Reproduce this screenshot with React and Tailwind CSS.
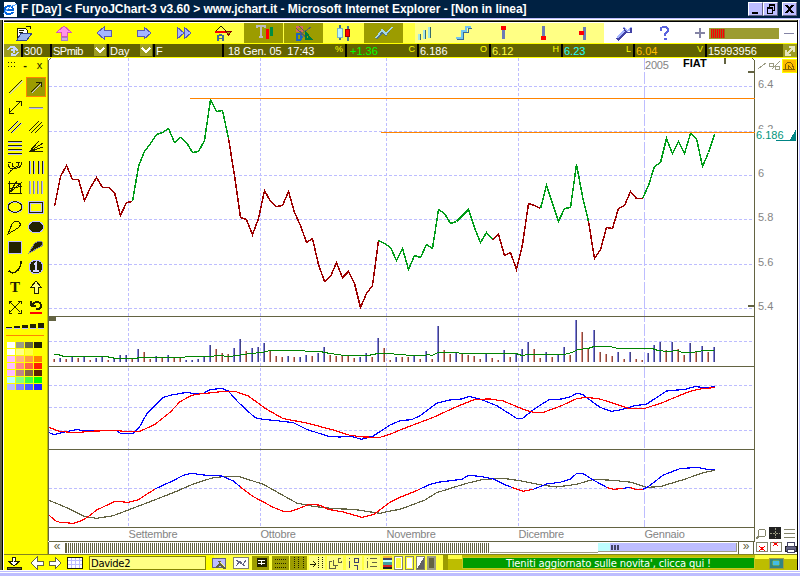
import React from 'react';

const UP = '#009c18';
const DOWN = '#9c0000';

// closing prices as plot heights, one every 6px
const prices = [
  206, 176, 165, 179, 179, 200, 187, 177, 187, 187, 192, 215, 202,
  201, 166, 151, 143, 134, 132, 128, 142, 137, 142, 152, 151, 140, 99, 111, 110, 138,
  175, 217, 219, 234, 218, 190, 201, 206, 205, 191, 212, 225, 242, 238, 264, 281, 276, 262, 277, 271, 283,
  307, 293, 285, 240, 243, 247, 260, 248, 269, 255, 257, 244, 248, 209, 213, 223, 221, 215, 209, 227, 242, 232,
  239, 234, 255, 252, 269, 244, 203, 205, 208, 185, 203, 221, 208, 207, 164,
  196, 221, 258, 249, 227, 228, 208, 205, 191, 198, 198, 185, 166, 162, 138, 153, 141, 153, 133, 138, 166, 152, 134,
];

const trends = [
  [0, 13, DOWN], [13, 29, UP], [29, 54, DOWN], [54, 73, UP], [73, 81, DOWN],
  [81, 89, UP], [89, 98, DOWN], [98, 110, UP],
];

const volumes = '3r 4b 3r 5b 4r 5b 2r 4b 5b 2r 3b 7b 7b 3r 13b 10r 3r 6b 4r 7b 5r 4r 2b 2b 3b 5b 17b 13r 9r 8r 14b 23b 11r 14b 15b 19b 11r 6r 5r 6b 5r 5b 7b 6r 9b 15b 7r 6r 6r 6r 4r 5b 9b 5r 24b 14r 2r 5b 5r 5r 6b 3r 11b 3r 36b 12r 8r 9b 8r 7r 6r 3r 8b 4r 2r 12b 5r 8b 13b 20b 13r 4r 10b 5r 7b 15b 7r 42b 30r 13r 32b 10r 8r 6r 10b 3r 10b 3r 2r 9b 17b 20b 12r 20b 13r 7r 19b 10r 16b 10r 15b'.split(' ');

const volumeAverage = '54,354 58,354 64,356 106,356 116,358 135,358 140,357 170,357 200,356 210,356 218,355 230,356 250,353 262,352 270,350 290,350 320,351 330,353 345,355 368,355 378,353 388,353 400,354 412,355 424,355 428,354 432,355 438,352 456,352 462,353 516,353 522,355 528,354 564,354 572,352 578,349 588,348 594,346 610,346 618,348 644,348 652,348 658,350 668,351 678,350 682,352 692,352 704,350 714,350';

// oscillators, in thirds of a pixel below y = 310
const fastLine = '147,368 163,374 190,367 232,358 250,363 290,361 350,362 362,370 400,370 418,352 440,312 490,262 515,255 560,247 590,252 610,250 630,239 665,235 685,243 715,277 765,323 790,328 830,332 880,338 920,358 985,379 1020,381 1050,378 1085,388 1120,378 1170,345 1200,332 1235,329 1260,317 1310,280 1350,270 1385,267 1407,259 1440,267 1490,287 1550,325 1568,325 1600,299 1647,269 1685,267 1712,260 1730,250 1748,253 1770,270 1800,292 1835,304 1865,299 1900,288 1940,282 2000,243 2055,238 2085,230 2120,233 2144,230';
const slowLine = '147,352 175,363 210,367 240,367 265,364 350,361 370,364 420,364 465,343 510,307 540,275 575,256 605,251 640,248 670,244 705,244 745,258 800,298 850,326 920,339 1000,360 1050,376 1090,381 1140,382 1175,371 1200,360 1300,322 1370,290 1425,268 1470,267 1510,273 1570,298 1600,307 1630,307 1680,289 1730,266 1760,262 1800,267 1840,280 1885,295 1935,295 1990,277 2030,260 2070,244 2105,236 2144,233';
const signalLine = '147,571 205,595 255,620 290,625 340,617 440,579 520,548 580,522 640,503 680,499 715,499 790,523 890,579 940,589 1000,596 1060,598 1140,610 1160,605 1200,598 1275,570 1310,548 1400,520 1450,508 1510,505 1565,513 1630,526 1670,531 1730,523 1780,508 1840,511 1895,517 1940,532 1980,530 2050,509 2110,488 2144,481';
const momentum = [
  ['#ff0000', '147,615 165,632 180,637 220,640 245,632 265,620 290,600 345,574 385,577 415,569 465,537'],
  ['#0000ff', '465,537 515,514 550,496 575,490 620,496 665,498 700,513 720,530'],
  ['#ff0000', '720,530 760,560 820,592 850,604 872,604 900,594 925,584 940,583 960,586 985,598 1030,606 1085,622 1120,614 1170,577 1200,562 1250,542 1260,537'],
  ['#0000ff', '1260,537 1290,523 1320,516 1385,508 1405,496 1440,499 1480,507 1510,522 1535,532'],
  ['#ff0000', '1535,532 1570,544 1600,538'],
  ['#0000ff', '1600,538 1640,522 1680,517 1712,507 1730,490 1748,490 1780,510 1820,532'],
  ['#ff0000', '1820,532 1840,538 1870,535'],
  ['#0000ff', '1870,535 1890,532'],
  ['#ff0000', '1890,532 1905,538 1928,538'],
  ['#0000ff', '1928,538 1945,530 1990,495 2040,476 2092,472 2120,478 2144,479'],
];

const months = [[128, 'Settembre'], [260, 'Ottobre'], [386, 'Novembre'], [518, 'Dicembre'], [644, 'Gennaio']];

const swatches = [
  'bg-white', 'bg-[#9c9c84]', 'bg-[#636342]', 'bg-[#212100]',
  'bg-white', 'bg-[#ffff84]', 'bg-[#ffff42]', 'bg-[#ffff00]',
  'bg-[#ffbdff]', 'bg-[#ffb084]', 'bg-[#ff9c42]', 'bg-[#ff8400]',
  'bg-[#ffbdff]', 'bg-[#ff8484]', 'bg-[#ff6342]', 'bg-[#ff2100]',
  'bg-[#ffbdff]', 'bg-[#bd8484]', 'bg-[#846342]', 'bg-[#5a2100]',
  'bg-[#bdffff]', 'bg-[#84ff84]', 'bg-[#42ff42]', 'bg-[#00ff00]',
  'bg-[#bdbdff]', 'bg-[#8484ff]', 'bg-[#4a5aff]', 'bg-[#2121ff]',
];

const Icon = ({ w = 16, h = 16, children }) => (
  <svg width={w} height={h} viewBox={`0 0 ${w} ${h}`} fill="none" stroke="#212100" shapeRendering="crispEdges" className="block shrink-0">
    {children}
  </svg>
);

const drawTools = [
  <><path d="M2.500 15.500L15.500 2.500" stroke="#bdbdff" /><path d="M1.500 14.500L14.500 1.500" /></>,
  <><path d="M4 14L14 4" stroke="#bdbdff" /><path d="M3 13L13 3M8 3h5v5" /></>,
  <path d="M2 14L14 2M9 2h5v5M2 9v5h5" />,
  <><path d="M1 9.500h14" stroke="#bdbdff" /><path d="M1 8.500h14" stroke="#84846b" /></>,
  <><path d="M2 12L12 2M5 14L15 4" stroke="#bdbdff" /><path d="M1 12L11 2M4 14L14 4" /></>,
  <path d="M1 12L11 2M3 14L14 3M7 14L15 6" />,
  <><path d="M1 3.500h14M1 7.500h14M1 11.500h14M1 15.500h14" stroke="#bdbdff" /><path d="M1 2.500h14M1 6.500h14M1 10.500h14M1 14.500h14" /></>,
  <path d="M1 13L11 2M1 13L15 4M1 13L15 8M1 13L15 12" />,
  <path d="M1 15L8 8M1 5q2 7 7 4q6 1 7-6M5 4q0 5 4 4q3 0 3-5M1 3h3M9 3h4M3 12l5-3" />,
  <><path d="M2.500 2v13M6.500 2v13M11.500 2v13M15.500 2v13" stroke="#bdbdff" /><path d="M1.500 2v13M5.500 2v13M10.500 2v13M14.500 2v13" /></>,
  <path d="M2.500 14V2M2 14.500h13M2 14L15 3M2 14L10 2M2 10L15 7M1 4.500h12v10" />,
  <><path d="M2.500 2v13M6.500 2v13M10.500 2v13M14.500 2v13" stroke="#bdbdff" /><path d="M1.500 2v13M5.500 2v13M9.500 2v13M13.500 2v13" stroke="#84846b" /></>,
  <><ellipse cx="8" cy="8" rx="7" ry="5.500" stroke="#bdbdff" strokeWidth="2" /><ellipse cx="8" cy="8" rx="6.800" ry="5.300" /></>,
  <><rect x="1.500" y="3.500" width="13" height="10" stroke="#bdbdff" strokeWidth="3" /><rect x="1.500" y="3.500" width="13" height="10" /></>,
  <path d="M1 15L5 5q3-4 7-2q3 3-1 6z" />,
  <ellipse cx="8" cy="8" rx="7.500" ry="6" fill="#212100" stroke="#bdbdff" />,
  <rect x="1.500" y="2.500" width="13" height="12" fill="#212100" stroke="#bdbdff" />,
  <path d="M1 14L6 5q4-4 8-2q2 3-2 5z" fill="#212100" stroke="#8484a0" />,
  <path d="M2 12q4 4 9-1q3-3 3-9" strokeWidth="1.500" />,
  <><circle cx="8" cy="8" r="7" fill="#212100" stroke="#bdbdff" /><path d="M6 6l2-2v8M5 12h6" stroke="#d6d6ff" strokeWidth="2" /></>,
  <text x="3" y="13" fontSize="15" fontWeight="bold" fontFamily="Liberation Serif, serif" fill="#212100" stroke="none">T</text>,
  <path d="M8 2L13 8h-3v6H6V8H3z" fill="#ffff84" />,
  <path d="M3 3L13 13M13 3L3 13M2 5V2h3M11 2h3v3M2 11v3h3M11 14h3v-3" />,
  <><path d="M3 7V2M3 7h5M4 6q4-5 8-2q3 4-1 6H8" strokeWidth="2" /><path d="M2 14h12" stroke="#ff0000" strokeWidth="2" /></>,
];

const blueArrow = (d) => <path d={d} fill="#a5b5ff" stroke="#5a5aad" />;

const topTools = [
  ['', <><path d="M3 15V4h8l2 2v3" fill="#fff" /><path d="M3 16L7 9h11l-5 7z" fill="#9cb5ef" stroke="#31428c" /><path d="M5 6h5M5 8h4M12 2h4v3" /></>],
  ['', <><path d="M10 2L17 8h-4v4H7V8H3z" fill="#ff94e7" stroke="#d65ab5" /><path d="M7 13h6v3H7z" fill="#d6a5e7" stroke="#a584bd" /></>],
  ['', blueArrow('M3 9L10 3v3h7v6h-7v3z')],
  ['', blueArrow('M17 9L10 3v3H3v6h7v3z')],
  ['', <>{blueArrow('M3 3L10 9L3 15z')}{blueArrow('M10 3L17 9L10 15z')}</>],
  ['', <><path d="M2 7L7 2l5 5z" fill="#ffff42" /><path d="M1 7.500h11" stroke="#ff0000" strokeWidth="2" /><path d="M11 7h7l-3.500 4z" fill="#9c9c00" stroke="#840000" /><path d="M4 17v-5q2-2 5 0v5M4 14.500h5" stroke="#426b94" strokeWidth="1.500" /></>],
  ['bg-[#9c9c00]', <><path d="M3 4V2h8v2M7 2v11M5 13h4" stroke="#bdbdbd" strokeWidth="2" /><path d="M13 5v10" stroke="#f00" strokeWidth="3" /><path d="M17 3v9" stroke="#008c42" strokeWidth="3" /></>],
  ['bg-[#9c9c00]', <><path d="M3 3h5v4H3z" stroke="#d66b5a" strokeWidth="2" /><path d="M3 10h3l2 3-2 3H3z" stroke="#2163bd" strokeWidth="2" /><path d="M5 2L18 15M2 4L15 16M17 3L6 11" stroke="#5a5a6b" /><path d="M12 9l5 6h-5z" stroke="#007b39" strokeWidth="2" /></>],
  ['', <><path d="M6 1v15M14 2v15" stroke="#42738c" strokeWidth="2" /><path d="M3.500 4.500h5v9h-5z" fill="#bdf7ff" stroke="#7bb5c6" /><path d="M11.500 5.500h4v7h-4z" fill="#f00" stroke="#9c0000" /></>],
  ['bg-[#9c9c00]', <><path d="M2 15L9 8l3 3 6-8" stroke="#52737b" strokeWidth="1.500" /><path d="M2 14L8 6l4 4 6-7" stroke="#a5d6e7" strokeWidth="1.500" /></>],
  ['', <><path d="M6 10v6M11 6v9M16 3v11" stroke="#396b6b" strokeWidth="2" /><path d="M4.500 10v6M9.500 6v9M14.500 3v11" stroke="#a5e7e7" strokeWidth="2" /></>],
  ['', <><path d="M3 15.500h6V8.500h5V4.500h4" stroke="#396b94" /><path d="M2 14h5.500V7H12V3h5" stroke="#73c6ef" strokeWidth="2" /></>],
  ['', <><path d="M9.500 5v10" stroke="#6b7bb5" strokeWidth="3" /><path d="M7 4h5" stroke="#f00" strokeWidth="4" /></>],
  ['', <><path d="M9.500 2v11" stroke="#6b7bb5" strokeWidth="3" /><path d="M7 14h5" stroke="#f00" strokeWidth="4" /></>],
  ['', <><path d="M10.500 3v13" stroke="#6b7bb5" strokeWidth="3" /><path d="M5 9h5" stroke="#f00" strokeWidth="4" /></>],
  ['bg-white', <><path d="M3 16L11 8" stroke="#4242a5" strokeWidth="4" /><path d="M3 14l8-8M10 3q1 5 6 3l1-3" stroke="#a5b5ff" strokeWidth="2" /><path d="M10 4q1 6 7 4V4" stroke="#4242a5" strokeWidth="1.500" /></>],
  ['bg-white', <><path d="M7 7V4l2-1h3l2 2v2l-3 3v2" stroke="#5a63de" strokeWidth="2" /><path d="M11 14v2" stroke="#5a63de" strokeWidth="3" /></>],
];

const Cell = ({ className, tag, children }) => (
  <div className={`relative flex h-full shrink-0 items-end border-l-2 border-black pl-[1px] ${className}`}>
    <span className="leading-[12px]">{children}</span>
    {tag && <span className="absolute right-[2px] top-0 text-[9px] leading-[10px] text-[#ffff00]">{tag}</span>}
  </div>
);

const Drop = () => (
  <div className="flex h-[12px] w-[12px] shrink-0 items-center justify-center bg-[#9c9c21]">
    <Icon w={10} h={8}><path d="M1 2l4 4 4-4" stroke="#fff" strokeWidth="2" /></Icon>
  </div>
);

const windowButtons = [
  ['w-[15px]', <path d="M3 10h6" strokeWidth="2" />],
  ['w-[15px]', <path d="M5.500 4.500V1.500h5v6h-2M3.500 4.500h5v6h-5zM3 5.500h6M5 2.500h6" />],
  ['ml-[4px] w-[15px]', <path d="M3 2l7 8M10 2l-7 8" strokeWidth="2" />],
];

const TitleBar = () => (
  <div className="flex h-[18px] items-center bg-[#002142] pl-[3px] text-white">
    <Icon w={15} h={16}>
      <path d="M1 1h10l3 3v12H1z" fill="#fff" stroke="none" />
      <path d="M3 9h7q0-4-4-4t-4 4 4 4q3 0 4-2" stroke="#0063de" strokeWidth="2" />
      <path d="M0 13Q8 3 14 4" stroke="#5aa5ff" />
    </Icon>
    <div className="ml-[3px] w-[627px] whitespace-nowrap text-[12px] leading-[18px] font-bold tracking-[-0.03px]">
      F [Day] &lt; FuryoJChart-3 v3.60 &gt; www.jchart.it - Microsoft Internet Explorer - [Non in linea]
    </div>
    <div className="ml-[100px] flex">
      {windowButtons.map(([size, glyph], i) => (
        <span key={i} className={`h-[14px] border border-r-[#636384] border-b-[#636384] border-t-white border-l-white bg-[#bdbdff] ${size}`}>
          <Icon w={13} h={12}><g stroke="#000">{glyph}</g></Icon>
        </span>
      ))}
    </div>
  </div>
);

const TopToolbar = () => (
  <div className="flex h-[20px] bg-[linear-gradient(90deg,#ffff00_0_216px,#ffff42_216px_411px,#ffff84_411px_612px,#fff_612px)]">
    {topTools.map(([bg, icon], i) => (
      <div key={i} className={`flex w-[40px] shrink-0 items-center justify-center border-r border-transparent bg-clip-padding ${bg}`}>
        <Icon w={20} h={18}>{icon}</Icon>
      </div>
    ))}
    <div className="flex items-center pl-[11px]">
      <Icon w={10} h={10}><path d="M0 5h10M5 0v10" stroke="#8484a5" strokeWidth="1.500" /></Icon>
      <div className="ml-[4px] flex h-[11px] w-[70px] items-center bg-[#9c9c31] pl-[2px]">
        <div className="h-[9px] w-[14px] bg-[repeating-linear-gradient(90deg,#f00_0_1px,#9c6321_1px_2px)]" />
      </div>
      <span className="ml-[5px] h-[1px] w-[10px] bg-[#8484a5]" />
    </div>
  </div>
);

const QuoteBar = () => (
  <div className="flex h-[15px] border-y border-[#ffff00] bg-[#636300] text-[11px] text-white">
    <div className="flex w-[17px] items-center justify-center bg-[#9c9c21]">
      <Icon w={12} h={12}><path d="M1 5q2-5 6-2V1M11 7q-2 5-6 2v2M4 5h3v3M8 3l3 3" stroke="#c6d6ff" strokeWidth="1.500" /></Icon>
    </div>
    <Cell className="w-[29px]">300</Cell>
    <Cell className="w-[44px] tracking-[-0.5px]">SPmib</Cell>
    <Drop />
    <Cell className="ml-[1px] w-[33px]">Day</Cell>
    <Drop />
    <Cell className="ml-[1px] w-[69px]">F</Cell>
    <Cell className="w-[123px] pl-[4px]" tag="%"><span className="whitespace-pre tracking-[-0.1px]">18 Gen. 05  17:43</span></Cell>
    <Cell className="w-[72px] pl-[3px] text-[#00ff00]" tag="C">+1.36</Cell>
    <Cell className="w-[72px]" tag="O">6.186</Cell>
    <Cell className="w-[72px] text-[#ffff42]" tag="H">6.12</Cell>
    <Cell className="w-[72px] text-[#21ffff]" tag="L">6.23</Cell>
    <Cell className="w-[72px] text-[#ffbd00]" tag="V">6.04</Cell>
    <Cell className="w-[78px]">15993956</Cell>
    <div className="flex flex-1 items-center justify-center bg-[#9c9c21]">
      <Icon w={12} h={12}><path d="M2 10L10 2M5 2h5v5M2 5v5h5" stroke="#e7e7bd" strokeWidth="1.500" /></Icon>
    </div>
  </div>
);

const Sidebar = () => (
  <div className="flex w-[44px] shrink-0 flex-col border-r border-[#bdbd00] bg-[#ffff00] pl-[1px]">
    <div className="mt-[2px] flex h-[11px] gap-[4px] pl-[2px] text-[11px] leading-[10px] text-[#212100]">
      <span className="w-[10px]"><Icon w={10} h={10}><path d="M1 2.500h8M1 6.500h8" strokeDasharray="1 2" /></Icon></span>
      <span className="w-[8px] text-center font-bold">-</span>
      <span className="w-[13px] text-center">x</span>
    </div>
    <div className="mt-[6px] grid grid-cols-2">
      {drawTools.map((tool, i) => (
        <div key={i} className={`flex h-[20px] w-[20px] items-center justify-center ${i === 1 ? 'border border-[#ff8400] bg-[#9c9c00]' : ''}`}>
          <Icon>{tool}</Icon>
        </div>
      ))}
    </div>
    <div className="mt-[3px] flex h-[9px] items-end gap-[2px] pl-[1px]">
      <i className="h-[2px] w-[6px] border-b border-[#bdbdff] bg-[#212100]" />
      <i className="h-[3px] w-[6px] border-b border-[#bdbdff] bg-[#212100]" />
      <i className="h-[4px] w-[6px] border-b border-[#bdbdff] bg-[#212100]" />
      <i className="h-[5px] w-[6px] border-b border-[#bdbdff] bg-[#212100]" />
      <i className="h-[6px] w-[6px] border-b border-[#bdbdff] bg-[#212100]" />
    </div>
    <div className="mt-[6px] ml-[1px] h-[1px] w-[38px] bg-[#ff8400]" />
    <div className="mt-[6px] ml-[2px] grid w-[35px] grid-cols-4 gap-[1px]">
      {swatches.map((c, i) => <i key={i} className={`h-[6px] w-[8px] ${c}`} />)}
    </div>
  </div>
);

const Chart = () => (
  <svg width="708" height="484" viewBox="48 58 708 484" fill="none" shapeRendering="crispEdges" className="block font-['Liberation_Sans',sans-serif]">
    <g stroke="#bdbdff" strokeDasharray="3 2">
      {[86, 131, 175, 219, 264, 308, 341, 385, 407, 430, 488].map((y) => <path key={y} d={`M49 ${y}.5H752`} />)}
      {months.slice(0, 4).map(([x]) => <path key={x} d={`M${x}.5 58V527`} />)}
      <path d="M644.5 58V527" strokeDasharray="12 2" />
    </g>
    <g stroke="#636342">
      <path d="M48.5 61V541M754.5 61V541M49 316.5H755M49 366.500H755M49 449.500H755M49 527.500H755M49 541.500H755M48 61l3-3M755 61l-3-3" />
      <path d="M724.500 58v6M748 71.500h6M748 305.500h6" strokeWidth="2" />
    </g>
    <path d="M49 317h7v4h-7z" fill="#636342" />
    {volumes.map((v, i) => {
      const h = parseInt(v, 10);
      const blue = v.endsWith('b');
      return (
        <g key={i}>
          <rect x={53 + i * 6} y={362 - h} width="1" height={h} fill={blue ? '#8484de' : '#e79484'} />
          <rect x={54 + i * 6} y={362 - h} width="1" height={h} fill={blue ? '#424284' : '#844a42'} />
        </g>
      );
    })}
    <polyline points={volumeAverage} transform="translate(0 .5)" stroke="#008400" />
    {trends.map(([from, to, color]) => (
      <polyline
        key={from}
        points={prices.slice(from, to + 1).map((y, i) => `${54.5 + (from + i) * 6},${y + 0.5}`).join(' ')}
        stroke={color}
        strokeWidth="1.500"
      />
    ))}
    <path d="M190 98.500H755M381 132.500H755" stroke="#ff8400" />
    <g transform="translate(0 310) scale(.33333)" strokeWidth="3.600">
      <polyline points={fastLine} stroke="#0000ff" />
      <polyline points={slowLine} stroke="#ff0000" />
      <polyline points={signalLine} stroke="#636342" />
      {momentum.map(([color, points]) => <polyline key={points} points={points} stroke={color} />)}
    </g>
    <g fill="#848484" fontSize="11" letterSpacing="-0.2">
      {months.map(([x, name]) => <text key={x} x={x + 0.5} y="538">{name}</text>)}
      <text x="645" y="69">2005</text>
    </g>
    <text x="683" y="67" fontSize="11" fontWeight="bold" fill="#000">FIAT</text>
  </svg>
);

const PriceAxis = () => (
  <svg width="41" height="496" viewBox="756 58 41 496" fill="none" shapeRendering="crispEdges" className="block font-['Liberation_Sans',sans-serif]">
    <g fill="#848484" fontSize="11">
      <text x="758" y="88">6.4</text>
      <text x="758" y="133">6.2</text>
      <text x="758" y="177">6</text>
      <text x="758" y="221">5.8</text>
      <text x="758" y="266">5.6</text>
      <text x="758" y="310">5.4</text>
    </g>
    <path d="M756 129h34v12h-34z" fill="#fff" />
    <text x="756" y="139" fontSize="11" fill="#00947b">6.186</text>
    <path d="M796 129v11h-6z" fill="#008484" />
    <path d="M776 140.500h20" stroke="#008484" />
    <path d="M758 69l8-6M772 69l8-8M769 63h4v3h-4zM775 66h4v3h-4z" stroke="#9c9c84" />
    <path d="M782 59h14v13h-14z" fill="#ffbd00" stroke="#ffff00" />
    <path d="M783 69.500h12M785 69V65q4-5 7-1l2 5M788 69v-4l4 4" stroke="#846300" />
    <g stroke="#84846b">
      <circle cx="762" cy="533" r="4" fill="#fff" />
      <path d="M759 536l-3 3" strokeWidth="2" />
      <path d="M784 529.500h11M784 533.500h11M784 537.500h11" />
      <path d="M756.500 542.500h11v9h-11zM770.500 542.500h11v9h-11z" fill="#fff" />
    </g>
    <path d="M769 527h12v12h-12z" fill="#212121" />
    <path d="M775.5 528v10M770 533.500h10" stroke="#9c9c84" strokeDasharray="2 1" />
    <path d="M759 546l6 5M765 546l-6 5M773 542l5 4M778 542l-5 4" stroke="#ff0000" />
    <path d="M785 546h11v5h-11z" fill="#636384" stroke="#212121" />
    <path d="M787 542h7v4h-7zM787 549h7v3h-7z" fill="#fff" stroke="#424263" />
  </svg>
);

const ScrollRow = () => (
  <div className="flex h-[12px] text-[12px] leading-[9px] text-[#636342]">
    <div className="w-[17px] border-l border-[#636342] text-center">«</div>
    <div className="mt-[1px] h-[10px] w-[425px] border-l border-[#636342] bg-[repeating-linear-gradient(90deg,#636342_0_1px,#fff_1px_2px)]" />
    <div className="mt-[1px] h-[10px] w-[108px] border-b border-[#9c9c84]" />
    <div className="mt-[1px] flex h-[9px] w-[139px] items-center border-r border-b border-[#9c9c84] bg-[linear-gradient(90deg,#bdffff_0_12px,#bdbdff_12px)]">
      <div className="ml-[13px] h-[5px] w-[8px] bg-[repeating-linear-gradient(90deg,#424263_0_2px,transparent_2px_3px)]" />
    </div>
    <div className="ml-[1px] w-[16px] border-x border-[#636342] text-center">»</div>
  </div>
);

const Frame = ({ className = '', children, w = 16 }) => (
  <div className={`flex h-[14px] shrink-0 items-center justify-center ${className}`}>
    <Icon w={w} h={14}>{children}</Icon>
  </div>
);

const BottomToolbar = () => (
  <div className="flex h-[16px] items-center border-t border-[#848421] bg-[linear-gradient(90deg,#ffff00_0_210px,#ffff42_210px_442px,#bdbd00_442px)]">
    <Frame className="ml-[2px] w-[16px]"><path d="M1 11h14v2H1z" fill="#636342" /><path d="M8 10L2 5h4V1h4l-1 4h5z" fill="#fff" /></Frame>
    <Frame className="ml-[8px] w-[14px]" w={14}><path d="M1 7l6-6v4h6v4H7v4z" fill="#fff" stroke="#636342" /></Frame>
    <Frame className="ml-[4px] w-[14px]" w={14}><path d="M13 7L7 1v4H1v4h6v4z" fill="#fff" stroke="#636342" /></Frame>
    <Frame className="ml-[5px] w-[16px]"><path d="M.500 1.500h15v11H.500z" fill="#fff" /><path d="M1 4.500h14M1 8.500h14M4.500 2v10M8.500 2v10M12.500 2v10" stroke="#bdbdff" /></Frame>
    <div className="ml-[6px] h-[14px] w-[117px] border border-[#848400] bg-[#ffff84] pl-[1px] font-['DejaVu_Sans',sans-serif] text-[10px] leading-[14px] tracking-[-0.3px] text-black">Davide2</div>
    <Frame className="ml-[5px]"><path d="M1 2h13v9H1z" fill="#bdbdff" stroke="#636384" /><path d="M5 12l4-4 5 5M8 5l6 8" stroke="#636342" strokeWidth="2" /><path d="M9 6l5 5" stroke="#ffff84" /></Frame>
    <Frame className="ml-[6px]"><path d="M.500 1.500h15v11H.500z" fill="#fff" stroke="#84846b" /><path d="M3 10l4-5 3 4 3-5M3 4l9 6" stroke="#636384" /></Frame>
    <Frame className="ml-[3px] w-[17px] bg-[#9c9c00]"><path d="M4 2h9v8H4z" fill="#212100" /><path d="M5 4.500h7M5 7.500h7M8.500 5v4" stroke="#fff" /></Frame>
    <Frame className="ml-[3px] w-[17px] bg-[#9c9c00]"><path d="M2 3.500h12M2 7.500h12M2 11.500h12" strokeDasharray="1 1" /></Frame>
    <Frame className="ml-[1px] w-[17px] bg-[#9c9c00]"><path d="M3.500 1v12M7.500 1v12M12.500 1v12" strokeDasharray="1 1" /></Frame>
    <Frame className="ml-[2px] bg-[#ffff84]"><path d="M1 8h6l-3 3M4 5l3 3" /><path d="M9.500 1v12M13.500 1v12" strokeDasharray="1 1" /></Frame>
    <Frame className="ml-[2px] bg-[#ffff84]"><path d="M5 5.500H2.500v7h6V10M6.500 4v5h4M14 2.500h-3v4h3v-2" stroke="#636342" /></Frame>
    <Frame className="ml-[3px] bg-[#ffff84]"><path d="M3.500 2v1M3.500 5v7M8.500 2v4h4V2h-4M8 9.500h3v4" stroke="#42426b" /></Frame>
    <Frame className="ml-[2px] bg-[#ffff84]"><path d="M3.500 2v1M3.500 5v7M6 2.500h7M8 6.500h5M6 10.500h7" stroke="#636342" /></Frame>
    <div className="ml-[3px] h-[13px] w-[9px] bg-[linear-gradient(#f7bd42_0_2px,#424263_2px_4px,#bdffff_4px_6px,#429c9c_6px_9px,#d62121_9px_11px,#212121_11px)]" />
    <div className="ml-[2px] h-[14px] w-[9px] border border-[#84846b] bg-[#ffff42] ring-1 ring-white ring-inset" />
    <div className="ml-[2px] h-[14px] w-[9px] border border-[#84846b] bg-white ring-1 ring-[#ffff42] ring-inset" />
    <div className="ml-[2px] h-[14px] w-[9px] border border-[#84846b] bg-[linear-gradient(120deg,#fff_50%,#636363_50%)]" />
    <div className="ml-[2px] h-[14px] w-[9px] border-2 border-[#9c9c84] bg-[#636342]" />
    <div className="ml-[7px] h-[15px] w-[5px] bg-[#9c9c00]" />
    <div className="h-[15px] w-[14px] bg-[linear-gradient(#ffff42_0_4px,#bdbd00_4px)]" />
    <div className="h-[12px] w-[293px] border border-[#c6c621] bg-[#009c00] text-center font-['DejaVu_Sans',sans-serif] text-[10px] leading-[11px] tracking-[-0.15px] text-white">Tieniti aggiornato sulle novita', clicca qui !</div>
    <div className="h-[15px] flex-1 bg-[linear-gradient(#ffff42_0_4px,#bdbd00_4px)] pt-[2px] pl-[14px]">
      <Icon w={15} h={12}><path d="M0 1h14v10H0z" fill="#318484" stroke="#9c9c42" /><ellipse cx="7" cy="6" rx="4" ry="3" fill="#42bde7" stroke="#63a563" /></Icon>
    </div>
  </div>
);

export default function App() {
  return (
    <div className="h-[576px] w-[800px] overflow-hidden bg-white font-['Liberation_Sans',Arial,sans-serif]">
      <TitleBar />
      <div className="h-[1px] bg-[#bdbdff]" />
      <div className="h-[1px] bg-white" />
      <div className="flex h-[550px] border-r border-[#bdbdff]">
        <div className="w-[2px] shrink-0 bg-[#636342]" />
        <div className="w-[1px] shrink-0 bg-black" />
        <div className="flex w-[795px] flex-col border-r border-black pl-[1px]">
          <div className="h-[1px] bg-[#636342]" />
          <div className="h-[1px] bg-black" />
          <div className="h-[1px] bg-white" />
          <TopToolbar />
          <QuoteBar />
          <div className="flex h-[496px]">
            <Sidebar />
            <div className="w-[708px] shrink-0">
              <Chart />
              <ScrollRow />
            </div>
            <PriceAxis />
          </div>
          <BottomToolbar />
        </div>
      </div>
      <div className="mt-[1px] h-[1px] bg-[#bdbdff]" />
      <div className="mt-[1px] h-[3px] bg-[#bdbdff]" />
    </div>
  );
}
